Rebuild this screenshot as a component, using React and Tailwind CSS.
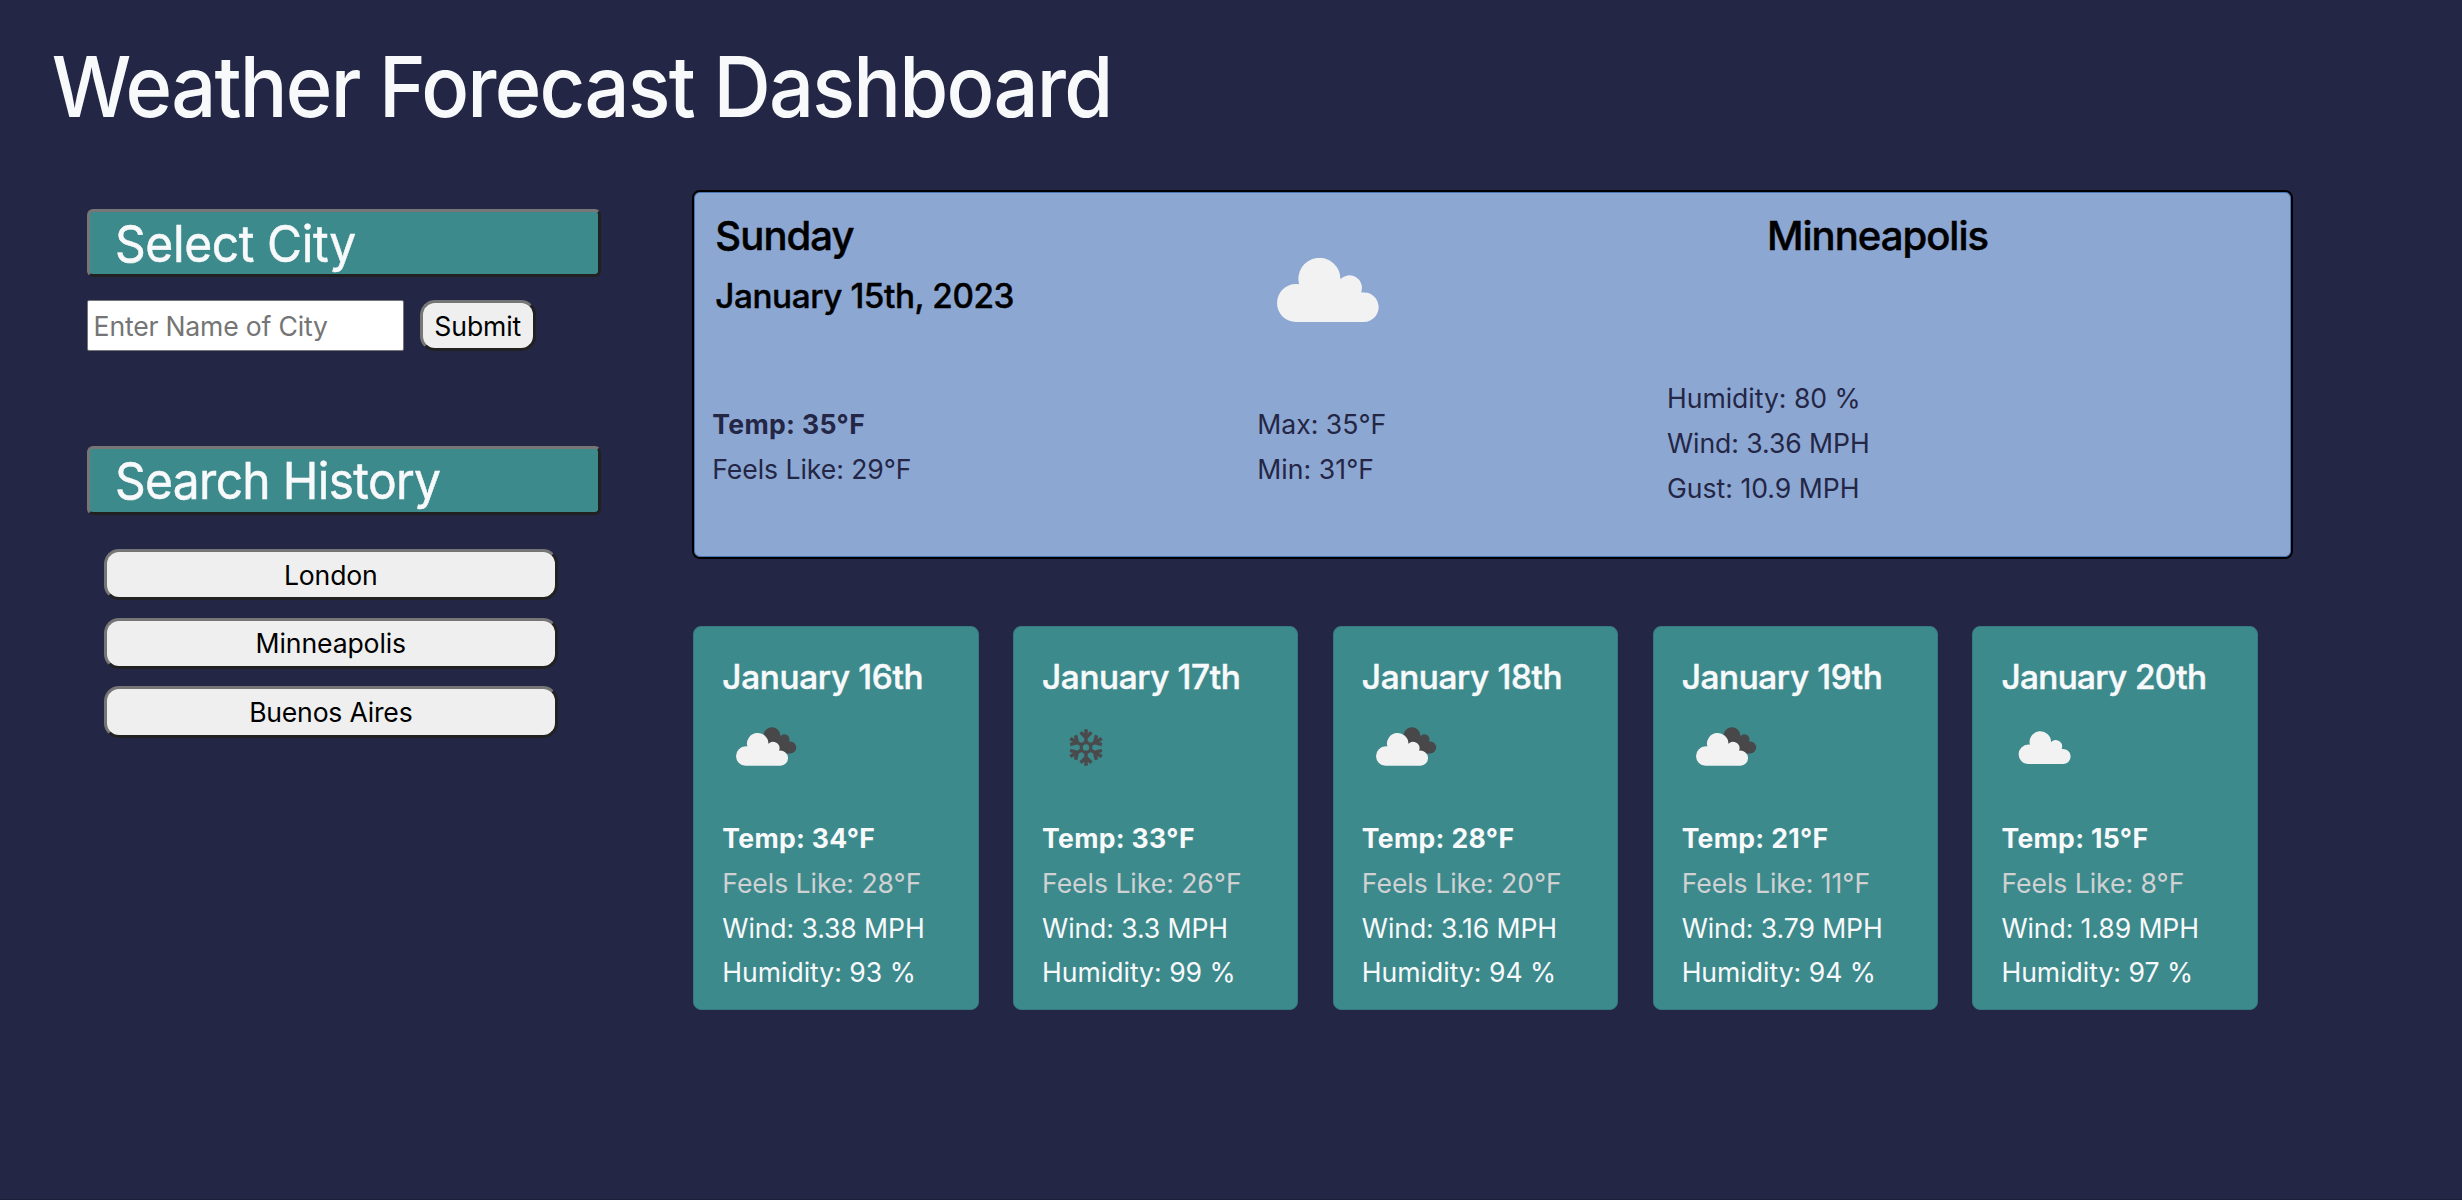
import React from "react";

const CLOUD =
  "M19 64 A19 19 0 0 1 19 26 Q20.8 26 22.1 26.2 A21 21 0 1 1 63.4 21 A12.6 12.6 0 0 1 84.4 33.5 L84.4 34.6 A14.8 14.8 0 1 1 86.7 64 Z";

function BigCloud() {
  return (
    <svg width="101.5" height="64" viewBox="0 0 101.5 64" className="shrink-0">
      <path d={CLOUD} fill="#f2f2f2" />
    </svg>
  );
}

function BrokenClouds() {
  return (
    <g>
      <path d={CLOUD} fill="#48484a" transform="translate(32.6 30.3) scale(.41)" />
      <path d={CLOUD} fill="#f2f2f2" transform="translate(14 36) scale(.512)" />
    </g>
  );
}

function SingleCloud() {
  return <path d={CLOUD} fill="#f2f2f2" transform="translate(17.6 34.3) scale(.512)" />;
}

function Snow() {
  return (
    <g transform="translate(44 50.5)" stroke="#4a4a4c" strokeWidth="3.5" fill="none">
      <circle r="4.8" strokeWidth="3.2" />
      {[0, 60, 120, 180, 240, 300].map((a) => (
        <path key={a} transform={`rotate(${a})`} d="M0 -4V-18.2M-5.4 -15.2L0 -10L5.4 -15.2" />
      ))}
    </g>
  );
}

const days = [
  { date: "January 16th", ls: "tracking-[-0.3px]", icon: BrokenClouds, temp: 34, feels: 28, wind: "3.38", hum: 93 },
  { date: "January 17th", ls: "tracking-[-0.37px]", icon: Snow, temp: 33, feels: 26, wind: "3.3", hum: 99 },
  { date: "January 18th", ls: "tracking-[-0.36px]", icon: BrokenClouds, temp: 28, feels: 20, wind: "3.16", hum: 94 },
  { date: "January 19th", ls: "tracking-[-0.36px]", icon: BrokenClouds, temp: 21, feels: 11, wind: "3.79", hum: 94 },
  { date: "January 20th", ls: "tracking-[-0.62px]", icon: SingleCloud, temp: 15, feels: 8, wind: "1.89", hum: 97 },
];

const bevel =
  "border-[3px] border-t-[#767676] border-l-[#767676] border-r-[#212121] border-b-[#212121]";

function DayCard({ day }) {
  const Icon = day.icon;
  return (
    <article className="h-[383.7px] w-[285.4px] shrink-0 rounded-[8px] border border-[#367a7f] bg-[#3d8a8d] pt-[30px] pl-[28px] text-[26.6px] leading-[44.8px] whitespace-nowrap text-[#f8f9fa]">
      <h3 className={`text-[33.3px] leading-[40px] font-medium [-webkit-text-stroke:0.5px] ${day.ls}`}>{day.date}</h3>
      <svg width="100" height="119" viewBox="0 0 100 119" className="block">
        <Icon />
      </svg>
      <p className="font-bold tracking-[0.3px]">Temp: {day.temp}°F</p>
      <p className="tracking-[-0.05px] text-[#d0d1d2]">Feels Like: {day.feels}°F</p>
      <p className="tracking-[-0.1px]">Wind: {day.wind} MPH</p>
      <p className="tracking-[-0.02px]">Humidity: {day.hum} %</p>
    </article>
  );
}

export default function App() {
  return (
    <div className="h-[1200px] w-[2462px] overflow-hidden border-b border-[#1d1f38] bg-[#232644] font-[Inter,sans-serif] text-[26.6px]">
      <h1 className="origin-left scale-x-[0.94] pt-[36.3px] text-[84.4px] leading-[100px] font-[450] tracking-[-1.85px] text-[#f8f9fa]">
        <span className="ml-[55px]">Weather Forecast Dashboard</span>
      </h1>
      <div className="flex pt-[53.7px]">
        <aside className="ml-[87px] w-[514.4px] shrink-0 pt-[19px]">
          <h2 className={`${bevel} h-[68px] rounded-[6px] bg-[#3d8a8d] pl-[25.4px] text-[50.2px] leading-[63.5px] font-normal tracking-[-0.4px] text-[#f8f9fa] [-webkit-text-stroke:0.5px]`}>
            <span className="inline-block origin-left scale-x-[0.955]">Select City</span>
          </h2>
          <form className="mt-[23px] flex gap-[15.7px]" onSubmit={(e) => e.preventDefault()}>
            <input
              type="text"
              placeholder="Enter Name of City"
              className="h-[51.3px] w-[317.3px] rounded-[2px] border-[1.5px] border-[#767676] bg-white pl-[5.6px] tracking-[-0.2px] placeholder:text-[#757575]"
            />
            <button className={`${bevel} h-[51.3px] w-[115.6px] rounded-[15px] bg-[#efefef] pt-[2px] tracking-[-0.1px] text-black`}>
              Submit
            </button>
          </form>
          <h2 className={`${bevel} mt-[94.7px] h-[68.6px] rounded-[6px] bg-[#3d8a8d] pl-[25.4px] text-[50.2px] leading-[63.5px] font-normal tracking-[-0.7px] text-[#f8f9fa] [-webkit-text-stroke:0.5px]`}>
            <span className="inline-block origin-left scale-x-[0.955]">Search History</span>
          </h2>
          <div className="mt-[34.4px] ml-[17px] flex w-[453.6px] flex-col gap-[17.4px] text-black">
            <button className={`${bevel} h-[51.3px] rounded-[15px] bg-[#efefef] pt-[2px] tracking-[-0.15px]`}>London</button>
            <button className={`${bevel} h-[51.3px] rounded-[15px] bg-[#efefef] pt-[2px] tracking-[-0.12px]`}>Minneapolis</button>
            <button className={`${bevel} h-[51.3px] rounded-[15px] bg-[#efefef] pt-[2px] tracking-[-0.21px]`}>Buenos Aires</button>
          </div>
        </aside>
        <main className="ml-[90px]">
          <section className="ml-[0.6px] h-[369.3px] w-[1601px] rounded-[8px] border-2 border-black bg-[#8da7d3] pt-[19.6px] pl-[18.3px] whitespace-nowrap shadow-[inset_0_0_0_1px_#4a75b5]">
            <div className="grid h-[164.8px] grid-cols-[544.9px_409.8px_1fr] text-black">
              <div className="pl-[3px]">
                <h3 className="text-[40px] leading-[48px] font-medium tracking-[-0.9px] [-webkit-text-stroke:0.5px]">Sunday</h3>
                <p className="mt-[16px] text-[33.3px] leading-[40px] font-medium tracking-[-0.42px] [-webkit-text-stroke:0.4px]">January 15th, 2023</p>
              </div>
              <div className="pt-[46.7px] pl-[20.2px]">
                <BigCloud />
              </div>
              <h3 className="pl-[100px] text-[40px] leading-[48px] font-medium tracking-[-0.98px] [-webkit-text-stroke:0.5px]">Minneapolis</h3>
            </div>
            <div className="grid grid-cols-[544.9px_409.8px_1fr] leading-[44.8px] text-[#232644]">
              <div className="pt-[25.8px]">
                <p className="font-bold tracking-[0.32px]">Temp: 35°F</p>
                <p className="tracking-[-0.07px]">Feels Like: 29°F</p>
              </div>
              <div className="pt-[25.8px]">
                <p>Max: 35°F</p>
                <p className="tracking-[0.06px]">Min: 31°F</p>
              </div>
              <div>
                <p className="tracking-[-0.03px]">Humidity: 80 %</p>
                <p className="tracking-[-0.08px]">Wind: 3.36 MPH</p>
                <p>Gust: 10.9 MPH</p>
              </div>
            </div>
          </section>
          <section className="mt-[66.7px] ml-[1.9px] flex gap-[34.4px]">
            {days.map((d) => (
              <DayCard key={d.date} day={d} />
            ))}
          </section>
        </main>
      </div>
    </div>
  );
}
